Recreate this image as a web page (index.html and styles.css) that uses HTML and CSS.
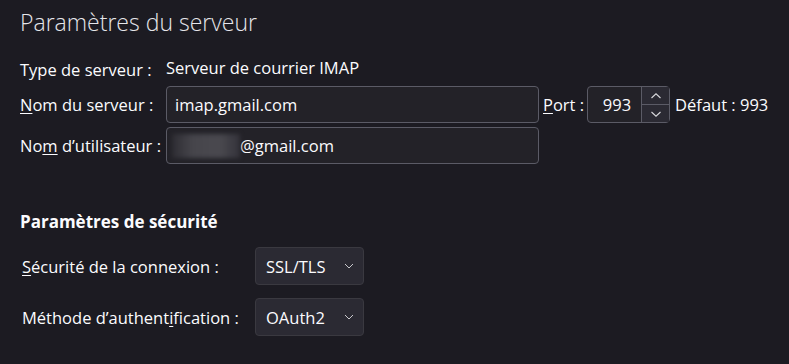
FILE: index.html
```html
<!DOCTYPE html>
<html lang="fr">

<head>
    <meta charset="UTF-8">
    <title>Paramètres du serveur</title>
    <link rel="stylesheet" href="styles.css">
</head>

<body>

    <div class="panel">
        <h1>Paramètres du serveur</h1>

        <div class="server-grid">
            <span class="label">Type de serveur :</span>
            <span class="value">Serveur de courrier IMAP</span>

            <label class="label" for="hostname"><u>N</u>om du serveur :</label>
            <div class="host-row">
                <div class="textbox wide" id="hostname">imap.gmail.com</div>
                <label class="port-label" for="port"><u>P</u>ort :</label>
                <div class="spinbox" id="port">
                    <span class="spin-value">993</span>
                    <span class="spin-buttons">
                        <span class="spin-btn">
                            <svg width="12" height="8" viewBox="0 0 12 8"><path d="M1.5 6 L6 1.8 L10.5 6" fill="none" stroke="#d8d8dc" stroke-width="1.1"/></svg>
                        </span>
                        <span class="spin-btn">
                            <svg width="12" height="8" viewBox="0 0 12 8"><path d="M1.5 2 L6 6.2 L10.5 2" fill="none" stroke="#d8d8dc" stroke-width="1.1"/></svg>
                        </span>
                    </span>
                </div>
                <span class="default">Défaut : 993</span>
            </div>

            <label class="label" for="username">No<u>m</u> d’utilisateur :</label>
            <div class="textbox wide" id="username"><span class="blur"></span>@gmail.com</div>
        </div>

        <h2>Paramètres de sécurité</h2>

        <div class="security-grid">
            <label class="label" for="socket"><u>S</u>écurité de la connexion :</label>
            <div class="select" id="socket">
                <span>SSL/TLS</span>
                <svg width="10" height="6" viewBox="0 0 10 6"><path d="M1 1 L5 5 L9 1" fill="none" stroke="#c8c8cc" stroke-width="1"/></svg>
            </div>

            <label class="label" for="auth">Méthode d’authent<u>i</u>fication :</label>
            <div class="select" id="auth">
                <span>OAuth2</span>
                <svg width="10" height="6" viewBox="0 0 10 6"><path d="M1 1 L5 5 L9 1" fill="none" stroke="#c8c8cc" stroke-width="1"/></svg>
            </div>
        </div>
    </div>

</body>

</html>
```

FILE: styles.css
```css
body {
    margin: 0;
    padding: 0;
    background-color: #1c1b22;
    color: #fbfbfe;
    font-family: "Open Sans", "Noto Sans", sans-serif;
    font-size: 16.5px;
}

.panel {
    padding: 5px 20px 0 20px;
}

h1 {
    margin: 0;
    font-size: 23px;
    font-weight: 300;
    line-height: 34px;
    color: #e6e6ea;
}

u {
    text-underline-offset: 2px;
}

.server-grid {
    display: grid;
    grid-template-columns: 146px auto;
    row-gap: 4px;
    align-items: center;
    margin-top: 18px;
}

.label {
    white-space: nowrap;
}

.value {
    line-height: 22px;
    margin-bottom: 3px;
}

.host-row {
    display: flex;
    align-items: center;
    white-space: nowrap;
}

.host-row > * {
    flex-shrink: 0;
}

.textbox {
    box-sizing: border-box;
    height: 37px;
    padding: 0 8px;
    display: flex;
    align-items: center;
    border: 1px solid #5b5b66;
    border-radius: 4px;
    background-color: #232228;
}

.wide {
    width: 373px;
}

.blur {
    display: inline-block;
    width: 68px;
    height: 24px;
    margin-left: -3px;
    background: linear-gradient(90deg, #2e2d33, #46454b 30%, #4a494f 70%, #34333a);
    filter: blur(2px);
}

.port-label {
    margin-left: 4px;
    margin-right: 3px;
}

.spinbox {
    box-sizing: border-box;
    width: 83px;
    height: 37px;
    display: flex;
    border: 1px solid #5b5b66;
    border-radius: 4px;
    background-color: #232228;
}

.spin-value {
    flex: 1;
    display: flex;
    align-items: center;
    justify-content: flex-end;
    padding-right: 10px;
}

.spin-buttons {
    width: 27px;
    display: flex;
    flex-direction: column;
    border-left: 1px solid #5b5b66;
}

.spin-btn {
    flex: 1;
    display: flex;
    align-items: center;
    justify-content: center;
    background-color: #2b2a33;
}

.spin-btn + .spin-btn {
    border-top: 1px solid #5b5b66;
}

.default {
    margin-left: 5px;
}

h2 {
    margin: 47px 0 0 0;
    font-size: 17px;
    font-weight: 700;
    line-height: 22px;
}

.security-grid {
    display: grid;
    grid-template-columns: 233px 109px;
    row-gap: 13px;
    align-items: center;
    margin-top: 14px;
    padding-left: 2px;
}

.select {
    box-sizing: border-box;
    height: 38px;
    padding: 0 9px 0 10px;
    display: flex;
    align-items: center;
    justify-content: space-between;
    border: 1px solid #3a3940;
    border-radius: 4px;
    background-color: #2b2a33;
}
```
